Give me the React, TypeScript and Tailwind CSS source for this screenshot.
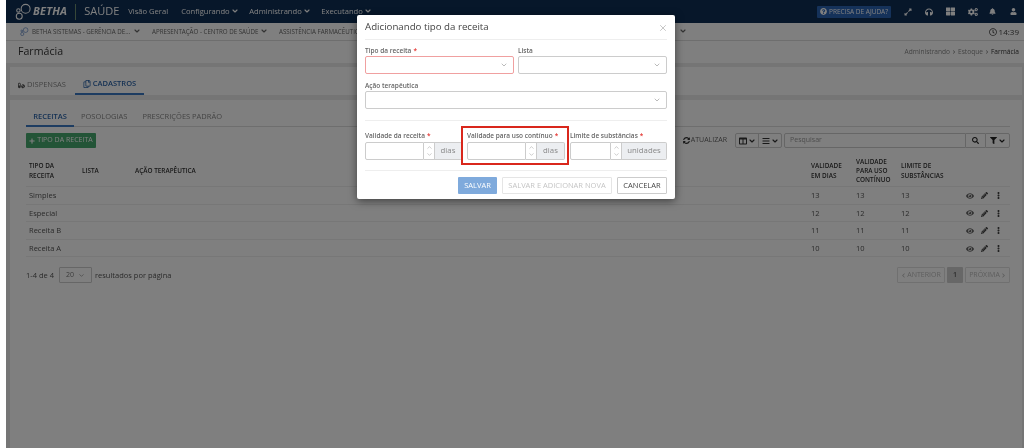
import React from "react";
import { FaEye, FaPencilAlt, FaEllipsisV, FaSearch, FaFilter, FaColumns, FaBell, FaUser, FaCogs, FaThLarge, FaExpandAlt, FaHeadphones, FaQuestionCircle, FaRegClock, FaSyncAlt, FaBars, FaPlus, FaRegCopy, FaPills, FaChevronLeft, FaChevronRight } from "react-icons/fa";
import { ChevronDown, ChevronUp, X } from "lucide-react";

const Caret = ({ c = "" }: { c?: string }) => <ChevronDown size={8} strokeWidth={3.5} className={c} />;

const Logo = ({ color, size }: { color: string; size: number }) => (
  <svg width={size} height={size} viewBox="0 0 16 16" fill="none" stroke={color} strokeWidth="1">
    <circle cx="10" cy="5.5" r="4.2" />
    <circle cx="3.2" cy="7" r="1.6" />
    <circle cx="4" cy="12.5" r="2.8" />
  </svg>
);

const NavItem = ({ label, w, caret }: { label: string; w: string; caret?: boolean }) => (
  <span className={`flex items-center gap-[1px] text-[7.6px] text-white whitespace-nowrap ${w}`}>
    {label}
    {caret && <Caret />}
  </span>
);

const rows = [
  ["Simples", "13"],
  ["Especial", "12"],
  ["Receita B", "11"],
  ["Receita A", "10"],
];

const cols = "grid grid-cols-[53px_53px_676px_45px_45px_62px_1fr]";

const Label = ({ text, req }: { text: string; req?: boolean }) => (
  <div className="h-[10px] pt-px text-[6.5px] leading-[10px] font-semibold text-[#666] whitespace-nowrap">
    {text}
    {req && <span className="text-[#e53935] ml-[2px] align-top">*</span>}
  </div>
);

const SelectBox = ({ error }: { error?: boolean }) => (
  <div className={`h-[18px] mt-[1px] rounded-[2px] border bg-white flex items-center justify-end pr-[5px] ${error ? "border-[#f0a0a0]" : "border-[#ccc]"}`}>
    <ChevronDown size={8} className="text-[#999]" />
  </div>
);

const NumberField = ({ label, unit, w, inputW, addonW }: { label: string; unit: string; w: string; inputW: string; addonW: string }) => (
  <div className={`flex flex-col gap-[2px] ${w}`}>
    <Label text={label} req />
    <div className="flex h-[18px] text-[7.8px]">
      <div className={`${inputW} border border-[#ccc] rounded-l-[2px] bg-white`} />
      <div className="w-[11px] border-y border-r border-[#ccc] flex flex-col items-center justify-center text-[#aaa] bg-white">
        <ChevronUp size={7} />
        <ChevronDown size={7} />
      </div>
      <div className={`${addonW} bg-[#eceef1] border-y border-r border-[#ccc] rounded-r-[2px] flex items-center justify-center text-[#888]`}>{unit}</div>
    </div>
  </div>
);

export default function App() {
  return (
    <div className="relative h-[448px] w-[1024px] overflow-hidden bg-white blur-[0.4px]" style={{ fontFamily: '"Open Sans", sans-serif' }}>
      <div className="ml-[6px] h-full flex flex-col bg-[#eaeaea]">
        <header className="h-[23px] shrink-0 bg-[#0e2e54] flex items-center pl-[9px] pr-[7px]">
          <Logo color="#ffffff" size={17} />
          <span className="ml-[1px] text-[11px] font-bold italic text-white tracking-[0.2px]">BETHA</span>
          <span className="ml-[8px] h-[16px] w-px bg-[#6f8f70]" />
          <span className="ml-[8px] w-[44px] text-[11px] text-white">SAÚDE</span>
          <div className="flex items-center">
            <NavItem label="Visão Geral" w="w-[53px]" />
            <NavItem label="Configurando" w="w-[68px]" caret />
            <NavItem label="Administrando" w="w-[72px]" caret />
            <NavItem label="Executando" w="w-[60px]" caret />
          </div>
          <div className="ml-auto flex items-center text-white">
            <span className="h-[12px] w-[74px] rounded-[1px] bg-[#2a64b4] flex items-center justify-center gap-[2px] text-[6.5px] whitespace-nowrap"><FaQuestionCircle size={7} />PRECISA DE AJUDA?</span>
            <FaExpandAlt size={8} className="ml-[13px]" />
            <FaHeadphones size={8} className="ml-[13px]" />
            <FaThLarge size={9} className="ml-[13px]" />
            <FaCogs size={10} className="ml-[13px]" />
            <FaBell size={7} className="ml-[11px]" />
            <FaUser size={7} className="ml-[14px]" />
          </div>
        </header>

        <div className="h-[18px] shrink-0 bg-white border-b border-[#ddd] flex items-center pl-[14px] pr-[5px] text-[6.2px] text-[#666] whitespace-nowrap">
          <Logo color="#3f6fb5" size={9} />
          <span className="ml-[3px] w-[120px] flex items-center gap-[3px]">BETHA SISTEMAS - GERÊNCIA DE... <Caret /></span>
          <span className="w-[127px] flex items-center gap-[2px]">APRESENTAÇÃO - CENTRO DE SAÚDE <Caret /></span>
          <span className="w-[410px] flex items-center justify-between pr-[2px]">ASSISTÊNCIA FARMACÊUTICA<Caret /></span>
          <span className="ml-auto flex items-center gap-[2px] text-[8px] text-[#444]"><FaRegClock size={8} />14:39</span>
        </div>

        <div className="h-[22px] shrink-0 bg-white flex items-center justify-between pl-[12px] pr-[5px]">
          <span className="text-[10.6px] text-[#333]">Farmácia</span>
          <span className="flex items-center text-[6.6px] text-[#888] gap-[2px]">Administrando <FaChevronRight size={4} /> Estoque <FaChevronRight size={4} /> <span className="text-[#333]">Farmácia</span></span>
        </div>

        <div className="flex-1 pt-[4px] pl-[4px] pr-[2px] flex flex-col gap-[5px] min-h-0">
          <div className="h-[28px] shrink-0 bg-white pl-[8px] flex items-end">
            <div className="h-[28px] flex items-center gap-[2px] w-[57px] pt-[8px] text-[7.5px] text-[#888]">
              <FaPills size={7} className="text-[#555]" />DISPENSAS
            </div>
            <div className="h-[28px] flex items-center justify-center gap-[2px] w-[69px] pt-[8px] text-[7.5px] font-semibold text-[#2a63a8] border-b-2 border-[#3b78c2]">
              <FaRegCopy size={8} />CADASTROS
            </div>
          </div>

          <div className="flex-1 bg-white pl-[16px] pr-[12px] pt-[5px]">
            <div className="h-[22px] border-b border-[#ddd] flex items-end text-[7.5px] text-[#888]">
              <div className="w-[48px] h-[22px] pt-[4px] flex items-center justify-center font-semibold text-[#2a63a8] border-b-2 border-[#3b78c2] -mb-px">RECEITAS</div>
              <div className="ml-[7px] h-[22px] pt-[4px] flex items-center">POSOLOGIAS</div>
              <div className="ml-[15px] h-[22px] pt-[4px] flex items-center">PRESCRIÇÕES PADRÃO</div>
            </div>

            <div className="mt-[6px] h-[15px] flex items-center text-[7px]">
              <button className="h-[15px] w-[70px] rounded-[1px] bg-[#46a86e] text-white flex items-center justify-center gap-[2px] whitespace-nowrap"><FaPlus size={6} />TIPO DA RECEITA</button>
              <div className="ml-auto flex items-center h-[15px]">
                <span className="flex items-center gap-[1px] text-[#666] mr-[8px]"><FaSyncAlt size={7} className="text-[#333]" />ATUALIZAR</span>
                <div className="w-[47px] h-[15px] flex border border-[#ccc] rounded-[2px] text-[#333]">
                  <span className="flex-1 flex items-center justify-center gap-px border-r border-[#ccc]"><FaColumns size={8} /><Caret /></span>
                  <span className="flex-1 flex items-center justify-center gap-px"><FaBars size={8} /><Caret /></span>
                </div>
                <div className="ml-[2px] w-[182px] h-[15px] border border-[#ccc] rounded-l-[2px] pl-[5px] flex items-center text-[#999]">Pesquisar</div>
                <div className="w-[19px] h-[15px] border-y border-[#ccc] flex items-center justify-center text-[#222]"><FaSearch size={7} /></div>
                <div className="w-[25px] h-[15px] border border-[#ccc] rounded-r-[2px] flex items-center justify-center gap-px text-[#222]"><FaFilter size={7} /><Caret /></div>
              </div>
            </div>

            <div className={`${cols} mt-[7px] h-[32px] border-b border-[#eee] items-center text-[6.4px] leading-[9.3px] font-semibold text-[#333] pl-[3px]`}>
              <span>TIPO DA<br />RECEITA</span>
              <span>LISTA</span>
              <span>AÇÃO TERAPÊUTICA</span>
              <span>VALIDADE<br />EM DIAS</span>
              <span>VALIDADE<br />PARA USO<br />CONTÍNUO</span>
              <span>LIMITE DE<br />SUBSTÂNCIAS</span>
              <span />
            </div>
            {rows.map(([name, n]) => (
              <div key={name} className={`${cols} h-[17.6px] pt-px border-b border-[#eee] items-center text-[7.5px] text-[#555] pl-[3px]`}>
                <span className="whitespace-nowrap">{name}</span>
                <span />
                <span />
                <span>{n}</span>
                <span>{n}</span>
                <span>{n}</span>
                <span className="flex items-center gap-[7px] pl-[3px] text-[#444]">
                  <FaEye size={8} className="text-[#666]" />
                  <FaPencilAlt size={7} />
                  <FaEllipsisV size={7} />
                </span>
              </div>
            ))}

            <div className="mt-[10px] h-[16px] flex items-center text-[7.5px] text-[#555]">
              <span className="w-[27px] whitespace-nowrap">1-4 de 4</span>
              <span className="ml-[6px] w-[33px] h-[16px] border border-[#ccc] rounded-[1px] flex items-center justify-between px-[6px] text-[7px] text-[#777]">20<ChevronDown size={7} /></span>
              <span className="ml-[3px]">resultados por página</span>
              <div className="ml-auto flex items-center gap-[2px] text-[7px] text-[#bbb]">
                <span className="w-[48px] h-[16px] border border-[#e0e0e0] rounded-[1px] flex items-center justify-center gap-[1px]"><FaChevronLeft size={5} />ANTERIOR</span>
                <span className="w-[16px] h-[16px] bg-[#cfcfcf] rounded-[1px] flex items-center justify-center text-[#555] font-semibold">1</span>
                <span className="w-[45px] h-[16px] border border-[#e0e0e0] rounded-[1px] flex items-center justify-center gap-[1px]">PRÓXIMA<FaChevronRight size={5} /></span>
              </div>
            </div>
          </div>
        </div>
      </div>

      <div className="absolute left-[6px] top-0 right-0 bottom-0 bg-black/50" />

      <div className="absolute left-[357px] top-[15px] w-[318px] h-[184px] bg-white rounded-[2px] shadow-[0_2px_8px_rgba(0,0,0,0.5)] px-[8px] flex flex-col">
        <div className="h-[25px] shrink-0 border-b border-[#eee] flex items-center justify-between pt-[1px]">
          <span className="text-[9.7px] text-[#444]">Adicionando tipo da receita</span>
          <X size={10} className="text-[#bbb] -mr-[1px]" />
        </div>
        <div className="mt-[5px] grid grid-cols-2 gap-x-[4px]">
          <div><Label text="Tipo da receita" req /><SelectBox error /></div>
          <div><Label text="Lista" /><SelectBox /></div>
        </div>
        <div className="mt-[6px]"><Label text="Ação terapêutica" /><SelectBox /></div>
        <div className="mt-[11px] border-t border-[#eee] pt-[9px] flex gap-[5px]">
          <NumberField label="Validade da receita" unit="dias" w="w-[97px]" inputW="w-[59px]" addonW="w-[27px]" />
          <NumberField label="Validade para uso contínuo" unit="dias" w="w-[98px]" inputW="w-[59px]" addonW="w-[28px]" />
          <NumberField label="Limite de substâncias" unit="unidades" w="w-[97px]" inputW="w-[41px]" addonW="w-[45px]" />
        </div>
        <div className="mt-[10px] border-t border-[#eee] pt-[6px] flex justify-end gap-[5px] text-[7.5px]">
          <button className="w-[39px] h-[17px] rounded-[1px] bg-[#7faadc] text-white">SALVAR</button>
          <button className="w-[110px] h-[17px] rounded-[1px] border border-[#e5e5e5] text-[#c4c4c4]">SALVAR E ADICIONAR NOVA</button>
          <button className="w-[50px] h-[17px] rounded-[1px] border border-[#ccc] text-[#444]">CANCELAR</button>
        </div>
        <div className="absolute left-[104px] top-[111px] w-[108px] h-[39px] border-2 border-[#d9271c] pointer-events-none" />
      </div>
    </div>
  );
}
